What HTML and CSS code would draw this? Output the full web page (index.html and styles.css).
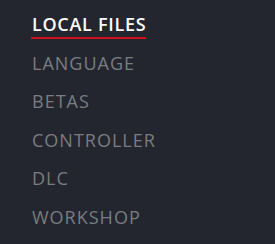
FILE: index.html
```html
<!DOCTYPE html>
<html lang="en">
<head>
    <meta charset="UTF-8">
    <meta name="viewport" content="width=device-width, initial-scale=1.0">
    <title>Properties</title>
    <link rel="stylesheet" href="styles.css">
</head>
<body>
    <!-- 側邊分頁 -->
    <ul class="tab-list">
        <li class="tab active"><span>LOCAL FILES</span></li>
        <li class="tab"><span>LANGUAGE</span></li>
        <li class="tab"><span>BETAS</span></li>
        <li class="tab"><span>CONTROLLER</span></li>
        <li class="tab"><span>DLC</span></li>
        <li class="tab"><span>WORKSHOP</span></li>
    </ul>
</body>
</html>
```

FILE: styles.css
```css
* {
    margin: 0;
    padding: 0;
    box-sizing: border-box;
}

body {
    font-family: "Open Sans", sans-serif;
    background-color: #23262e;
    color: #7a7c81;
    width: 275px;
    height: 244px;
    overflow: hidden;
}

/* 分頁列表 */
.tab-list {
    list-style: none;
    padding: 12px 0 0 31px;
}

.tab {
    font-size: 18px;
    line-height: 24px;
    letter-spacing: 1px;
    height: 38.6px;
}

.tab span {
    display: inline-block;
    padding: 0 0 1px 1px;
}

.tab.active {
    color: #ffffff;
    font-weight: 600;
    letter-spacing: 0.7px;
}

.tab.active span {
    border-bottom: 2px solid #d0111b;
}
```
